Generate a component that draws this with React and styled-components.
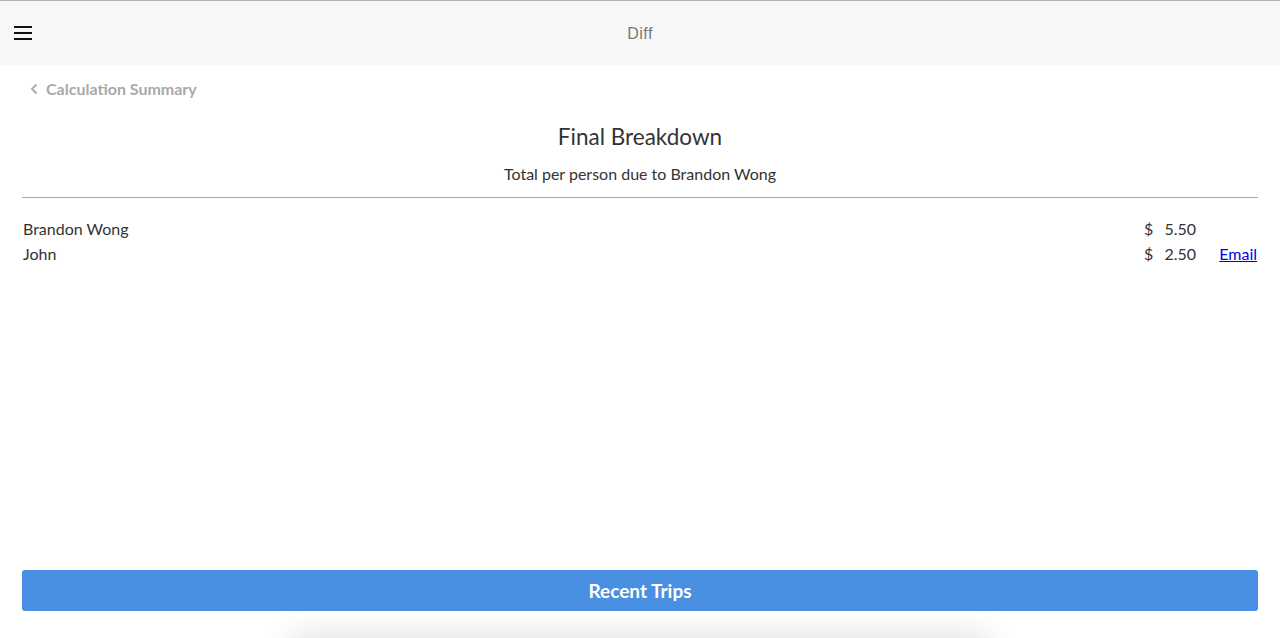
import React from "react";
import styled, { createGlobalStyle } from "styled-components";

const Global = createGlobalStyle`
  html, body { margin: 0; padding: 0; background: #fff; }
  body { font-family: Lato, "Open Sans", sans-serif; overflow: hidden; }
  * { box-sizing: border-box; }
`;

const Page = styled.div`
  width: 1280px;
  height: 638px;
  display: flex;
  flex-direction: column;
  border-top: 1px solid #b4b4b4;
  overflow: hidden;
  position: relative;
`;

const Header = styled.header`
  height: 64px;
  background: #f7f7f7;
  display: grid;
  grid-template-columns: 60px 1fr 60px;
  align-items: center;
`;

const MenuButton = styled.button`
  border: 0;
  background: transparent;
  padding: 0;
  margin-left: 14px;
  width: 18px;
  height: 14px;
  display: flex;
  flex-direction: column;
  justify-content: space-between;
`;

const Bar = styled.span`
  display: block;
  height: 2px;
  width: 18px;
  background: #111;
`;

const Title = styled.div`
  text-align: center;
  padding-top: 2px;
  font-family: "Liberation Sans", Arial, sans-serif;
  font-size: 16px;
  letter-spacing: 0.5px;
  color: #777;
`;

const Content = styled.main`
  flex: 1;
  padding: 0 22px;
  display: flex;
  flex-direction: column;
`;

const Back = styled.a`
  display: flex;
  align-items: center;
  gap: 7px;
  margin-top: 14px;
  margin-left: 8px;
  color: #a9a9a9;
  font-weight: 700;
  font-size: 16px;
  line-height: 20px;
  text-decoration: none;
`;

const Heading = styled.h1`
  margin: 24px 0 0;
  text-align: center;
  font-weight: 400;
  font-size: 22.5px;
  line-height: 28px;
  color: #333;
`;

const Sub = styled.p`
  margin: 13px 0 0;
  text-align: center;
  font-size: 16px;
  line-height: 20px;
  color: #333;
`;

const Rule = styled.hr`
  margin: 13px 0 0;
  border: 0;
  border-top: 1px solid #a8a8a8;
`;

const List = styled.div`
  margin-top: 18px;
  display: flex;
  flex-direction: column;
`;

const Row = styled.div`
  display: grid;
  grid-template-columns: 1fr auto 62px;
  align-items: center;
  height: 25px;
  padding-left: 1px;
  font-size: 16px;
  color: #333;
`;

const Amount = styled.span`
  display: flex;
  gap: 11px;
`;

const EmailLink = styled.a`
  color: #0000ee;
  text-decoration: underline;
  text-align: right;
  padding-right: 1px;
`;

const Spacer = styled.div`
  flex: 1;
`;

const Primary = styled.button`
  height: 41px;
  width: 100%;
  border: 0;
  border-radius: 3px;
  background: #4a90e2;
  color: #fff;
  font-family: Lato, sans-serif;
  font-weight: 700;
  font-size: 19px;
  margin-bottom: 27px;
`;

const Shadow = styled.div`
  position: absolute;
  left: 290px;
  right: 290px;
  bottom: -60px;
  height: 60px;
  border-radius: 8px;
  box-shadow: 0 -4px 30px rgba(0, 0, 0, 0.12);
`;

const people = [
  { name: "Brandon Wong", amount: "5.50", email: false },
  { name: "John", amount: "2.50", email: true },
];

export default function App() {
  return (
    <>
      <Global />
      <Page>
        <Header>
          <MenuButton aria-label="menu">
            <Bar />
            <Bar />
            <Bar />
          </MenuButton>
          <Title>Diff</Title>
          <div />
        </Header>
        <Content>
          <Back href="#">
            <svg width="9" height="12" viewBox="0 0 9 12">
              <path d="M6.5 1.5 L2 6 L6.5 10.5" fill="none" stroke="#a9a9a9" strokeWidth="1.8" />
            </svg>
            Calculation Summary
          </Back>
          <Heading>Final Breakdown</Heading>
          <Sub>Total per person due to Brandon Wong</Sub>
          <Rule />
          <List>
            {people.map((p) => (
              <Row key={p.name}>
                <span>{p.name}</span>
                <Amount>
                  <span>$</span>
                  <span>{p.amount}</span>
                </Amount>
                {p.email ? <EmailLink href="#">Email</EmailLink> : <span />}
              </Row>
            ))}
          </List>
          <Spacer />
          <Primary>Recent Trips</Primary>
        </Content>
        <Shadow />
      </Page>
    </>
  );
}
